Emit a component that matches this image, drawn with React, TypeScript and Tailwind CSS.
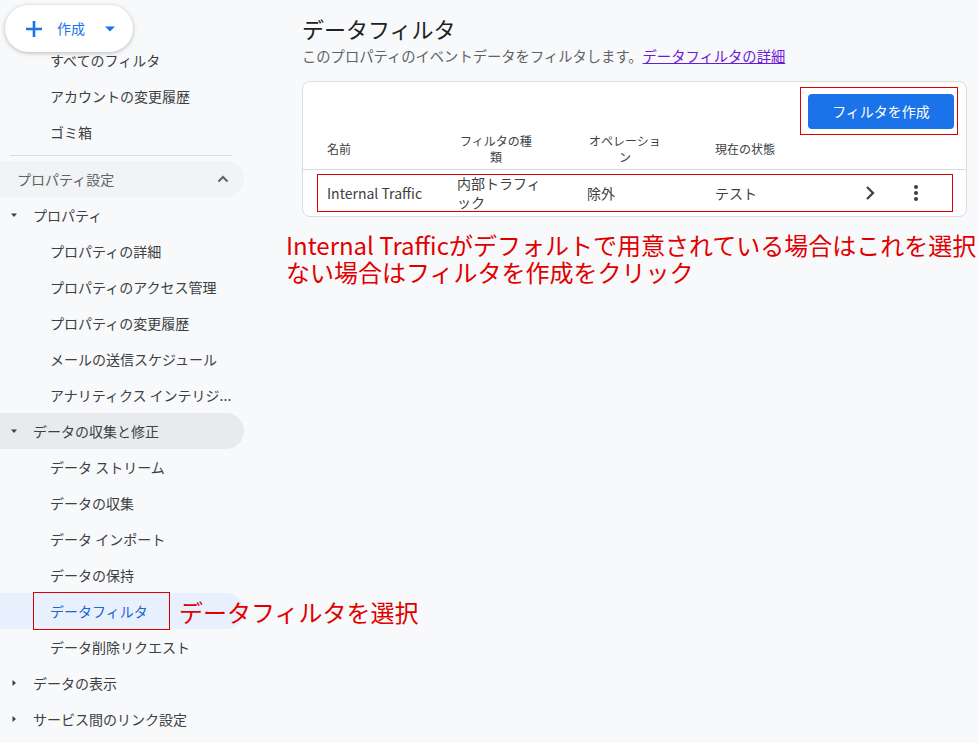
import React from 'react';

const font = { fontFamily: '"Noto Sans CJK JP", Roboto, "Noto Sans", sans-serif' };

const Caret = ({ open }: { open: boolean }) => (
  <svg width="8" height="8" viewBox="0 0 8 8" className="text-[#3c4043]">
    {open ? <path d="M1 2.5h6L4 6z" fill="currentColor" /> : <path d="M2.5 1v6L6 4z" fill="currentColor" />}
  </svg>
);

const SubItem = ({ label, active }: { label: string; active?: boolean }) => (
  <div
    className={`h-9 flex items-center pl-[50px] rounded-r-full text-[14px] ${
      active ? 'bg-[#e8f0fe] text-[#1967d2]' : 'text-[#3c4043]'
    }`}
  >
    {label}
  </div>
);

const Group = ({ label, open, active }: { label: string; open: boolean; active?: boolean }) => (
  <div
    className={`h-9 flex items-center pl-[10px] gap-[15px] rounded-r-full text-[14px] text-[#3c4043] ${
      active ? 'bg-[#e8eaed]' : ''
    }`}
  >
    <Caret open={open} />
    <span>{label}</span>
  </div>
);

const App: React.FC = () => {
  return (
    <div className="relative w-[979px] h-[743px] overflow-hidden bg-[#f8f9fa]" style={font}>
      <div className="flex h-full">
        {/* sidebar */}
        <div className="w-[244px] shrink-0 pt-[42px]">
          <SubItem label="すべてのフィルタ" />
          <SubItem label="アカウントの変更履歴" />
          <SubItem label="ゴミ箱" />
          <div className="ml-[10px] w-[222px] border-t border-[#dadce0] my-[5px]" />
          <div className="h-9 flex items-center justify-between pl-[17px] pr-[15px] rounded-r-full bg-[#f1f3f4] text-[14px] text-[#5f6368]">
            <span>プロパティ設定</span>
            <svg width="12" height="8" viewBox="0 0 12 8">
              <path d="M1.5 6.5L6 2l4.5 4.5" stroke="#5f6368" strokeWidth="2" fill="none" />
            </svg>
          </div>
          <Group label="プロパティ" open />
          <SubItem label="プロパティの詳細" />
          <SubItem label="プロパティのアクセス管理" />
          <SubItem label="プロパティの変更履歴" />
          <SubItem label="メールの送信スケジュール" />
          <SubItem label="アナリティクス インテリジ..." />
          <Group label="データの収集と修正" open active />
          <SubItem label="データ ストリーム" />
          <SubItem label="データの収集" />
          <SubItem label="データ インポート" />
          <SubItem label="データの保持" />
          <SubItem label="データフィルタ" active />
          <SubItem label="データ削除リクエスト" />
          <Group label="データの表示" open={false} />
          <Group label="サービス間のリンク設定" open={false} />
        </div>

        {/* main */}
        <div className="flex-1 pl-[58px] pr-[12px] pt-[13px]">
          <h1 className="text-[22px] leading-[30px] text-[#202124]">データフィルタ</h1>
          <p className="mt-[3px] text-[14.3px] leading-[20px] text-[#5f6368]">
            このプロパティのイベントデータをフィルタします。
            <span className="text-[#6a1bd6] underline">データフィルタの詳細</span>
          </p>
          <div className="mt-[15px] bg-white border border-[#dadce0] rounded-lg">
            <div className="flex justify-end pt-[12px] pr-[12px]">
              <button className="w-[146px] h-[35px] rounded bg-[#1a73e8] text-white text-[14px]">
                フィルタを作成
              </button>
            </div>
            <div className="flex items-center h-[41px] text-[12px] leading-[16px] text-[#3c4043] border-b border-[#dadce0]">
              <div className="w-[142px] pl-[24px]">名前</div>
              <div className="w-[130px] text-center pl-[12px] pr-[40px]">フィルタの種類</div>
              <div className="w-[130px] text-center pl-[12px] pr-[42px]">オペレーション</div>
              <div className="flex-1 pl-[10px]">現在の状態</div>
            </div>
            <div className="flex items-center h-[46px] text-[14px] text-[#3c4043]">
              <div className="w-[142px] pl-[24px]">Internal Traffic</div>
              <div className="w-[130px] pl-[12px] pr-[32px] leading-[19px]">内部トラフィック</div>
              <div className="w-[130px] pl-[12px]">除外</div>
              <div className="flex-1 pl-[10px]">テスト</div>
              <svg width="24" height="24" viewBox="0 0 24 24" className="mr-[22px]">
                <path d="M9 6l6 6-6 6" stroke="#3c4043" strokeWidth="2.2" fill="none" />
              </svg>
              <svg width="24" height="24" viewBox="0 0 24 24" className="mr-[38px]">
                <circle cx="12" cy="6" r="2" fill="#3c4043" />
                <circle cx="12" cy="12" r="2" fill="#3c4043" />
                <circle cx="12" cy="18" r="2" fill="#3c4043" />
              </svg>
            </div>
          </div>
        </div>
      </div>

      {/* create button */}
      <div className="absolute left-[5px] top-[5px] w-[128px] h-[47px] rounded-full bg-white shadow-[0_1px_4px_rgba(60,64,67,0.35)] flex items-center pl-[19px]">
        <svg width="20" height="20" viewBox="0 0 20 20">
          <path d="M10 2v16M2 10h16" stroke="#1a73e8" strokeWidth="2.6" />
        </svg>
        <span className="ml-[13px] text-[14px] text-[#1a73e8]">作成</span>
        <svg width="12" height="8" viewBox="0 0 12 8" className="ml-[19px]">
          <path d="M1 1.5h10L6 6.5z" fill="#1a73e8" />
        </svg>
      </div>

      {/* annotations */}
      <div className="absolute left-[800px] top-[87px] w-[158px] h-[48px] border border-[#d00]" />
      <div className="absolute left-[317px] top-[174px] w-[636px] h-[38px] border border-[#d00]" />
      <div className="absolute left-[33px] top-[592px] w-[137px] h-[38px] border border-[#d00]" />
      <div className="absolute left-[286px] top-[231px] text-[24px] leading-[27px] text-[#e00000] whitespace-nowrap">
        <div>Internal Trafficがデフォルトで用意されている場合はこれを選択</div>
        <div>ない場合はフィルタを作成をクリック</div>
      </div>
      <div className="absolute left-[179px] top-[597px] text-[24px] leading-[30px] text-[#e00000] whitespace-nowrap">
        データフィルタを選択
      </div>
    </div>
  );
};

export default App;
